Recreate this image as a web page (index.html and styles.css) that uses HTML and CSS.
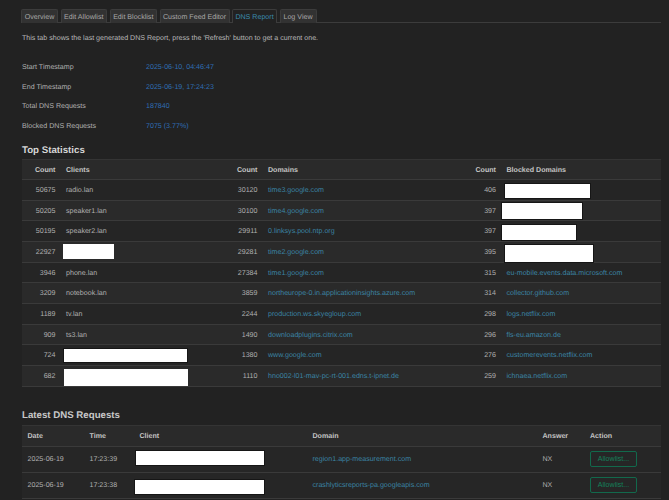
FILE: index.html
```html
<!DOCTYPE html>
<html lang="en">
<head>
    <meta charset="UTF-8">
    <title>DNS Report</title>
    <link rel="stylesheet" href="styles.css">
</head>
<body>

    <div class="tabs">
        <a class="tab tab-overview">Overview</a>
        <a class="tab tab-allow">Edit Allowlist</a>
        <a class="tab tab-block">Edit Blocklist</a>
        <a class="tab tab-feed">Custom Feed Editor</a>
        <a class="tab tab-dns active">DNS Report</a>
        <a class="tab tab-log">Log View</a>
    </div>

    <p class="intro">This tab shows the last generated DNS Report, press the 'Refresh' button to get a current one.</p>

    <div class="info">
        <div class="info-row"><span class="info-label">Start Timestamp</span><span class="info-value">2025-06-10, 04:46:47</span></div>
        <div class="info-row"><span class="info-label">End Timestamp</span><span class="info-value">2025-06-19, 17:24:23</span></div>
        <div class="info-row"><span class="info-label">Total DNS Requests</span><span class="info-value">187840</span></div>
        <div class="info-row"><span class="info-label">Blocked DNS Requests</span><span class="info-value">7075 (3.77%)</span></div>
    </div>

    <h3 class="top-title">Top Statistics</h3>
    <table class="stats">
        <colgroup>
            <col class="col-count1"><col class="col-clients"><col class="col-count2"><col class="col-domains"><col class="col-count3"><col>
        </colgroup>
        <thead>
            <tr><th class="num">Count</th><th>Clients</th><th class="num">Count</th><th>Domains</th><th class="num">Count</th><th>Blocked Domains</th></tr>
        </thead>
        <tbody>
            <tr><td class="num">50675</td><td>radio.lan</td><td class="num">30120</td><td><a>time3.google.com</a></td><td class="num">406</td><td class="hide"><span class="redact b1"></span></td></tr>
            <tr><td class="num">50205</td><td>speaker1.lan</td><td class="num">30100</td><td><a>time4.google.com</a></td><td class="num">397</td><td class="hide"><span class="redact b2"></span></td></tr>
            <tr><td class="num">50195</td><td>speaker2.lan</td><td class="num">29911</td><td><a>0.linksys.pool.ntp.org</a></td><td class="num">397</td><td class="hide"><span class="redact b3"></span></td></tr>
            <tr><td class="num">22927</td><td class="hide"><span class="redact c1"></span></td><td class="num">29281</td><td><a>time2.google.com</a></td><td class="num">395</td><td class="hide"><span class="redact b4"></span></td></tr>
            <tr><td class="num">3946</td><td>phone.lan</td><td class="num">27384</td><td><a>time1.google.com</a></td><td class="num">315</td><td><a>eu-mobile.events.data.microsoft.com</a></td></tr>
            <tr><td class="num">3209</td><td>notebook.lan</td><td class="num">3859</td><td><a>northeurope-0.in.applicationinsights.azure.com</a></td><td class="num">314</td><td><a>collector.github.com</a></td></tr>
            <tr><td class="num">1189</td><td>tv.lan</td><td class="num">2244</td><td><a>production.ws.skyegloup.com</a></td><td class="num">298</td><td><a>logs.netflix.com</a></td></tr>
            <tr><td class="num">909</td><td>ts3.lan</td><td class="num">1490</td><td><a>downloadplugins.citrix.com</a></td><td class="num">296</td><td><a>fls-eu.amazon.de</a></td></tr>
            <tr><td class="num">724</td><td class="hide"><span class="redact c2"></span></td><td class="num">1380</td><td><a>www.google.com</a></td><td class="num">276</td><td><a>customerevents.netflix.com</a></td></tr>
            <tr><td class="num">682</td><td class="hide"><span class="redact c3"></span></td><td class="num">1110</td><td><a>hno002-l01-mav-pc-rt-001.edns.t-ipnet.de</a></td><td class="num">259</td><td><a>ichnaea.netflix.com</a></td></tr>
        </tbody>
    </table>

    <h3 class="latest-title">Latest DNS Requests</h3>
    <table class="latest">
        <colgroup>
            <col class="col-date"><col class="col-time"><col class="col-client"><col class="col-domain"><col class="col-answer"><col>
        </colgroup>
        <thead>
            <tr><th>Date</th><th>Time</th><th>Client</th><th>Domain</th><th>Answer</th><th>Action</th></tr>
        </thead>
        <tbody>
            <tr><td>2025-06-19</td><td>17:23:39</td><td class="hide"><span class="redact l1"></span></td><td><a>region1.app-measurement.com</a></td><td>NX</td><td><button>Allowlist...</button></td></tr>
            <tr><td>2025-06-19</td><td>17:23:38</td><td class="hide"><span class="redact l2"></span></td><td><a>crashlyticsreports-pa.googleapis.com</a></td><td>NX</td><td><button>Allowlist...</button></td></tr>
        </tbody>
    </table>

</body>
</html>
```

FILE: styles.css
```css
html, body {
    height: 500px;
    overflow: hidden;
}
body {
    margin: 0;
    padding: 9px 8px 0 22px;
    background: #222222;
    color: #b0b0b0;
    font-family: 'Liberation Sans', Arial, sans-serif;
    font-size: 7.1px;
    text-rendering: geometricPrecision;
}
.tabs {
    display: flex;
    height: 13px;
    margin-left: -1px;
    border-bottom: 1px solid #3c3c3c;
}
.tab {
    display: flex;
    align-items: center;
    justify-content: center;
    height: 14px;
    box-sizing: border-box;
    margin-right: 2.5px;
    background: #323232;
    border: 1px solid #3c3c3c;
    border-bottom: none;
    border-radius: 2px 2px 0 0;
    color: #a8a8a8;
}
.tab-overview { width: 37px; }
.tab-allow { width: 46.5px; }
.tab-block { width: 47.5px; }
.tab-feed { width: 70px; }
.tab-dns { width: 45px; }
.tab-log { width: 37px; }
.tab.active {
    background: #222222;
    color: #3a8cae;
}
.intro {
    margin: 10px 0 0;
    line-height: 10px;
    color: #b8b8b8;
}
.info {
    margin-top: 15px;
}
.info-row {
    display: flex;
    height: 19.6px;
    line-height: 19.6px;
}
.info-label {
    width: 124px;
}
.info-value {
    color: #2f6db5;
}
h3 {
    margin: 0;
    font-size: 9.7px;
    line-height: 12px;
    color: #d6d6d6;
}
.top-title {
    margin-top: 9px;
}
.latest-title {
    margin-top: 23.5px;
    color: #c8c8c8;
}
table {
    width: 639px;
    margin-top: 2px;
    border-collapse: collapse;
    table-layout: fixed;
    border-top: 1px solid #343434;
}
.latest {
    margin-top: 2.5px;
}
th, td {
    padding: 0 5.5px;
    text-align: left;
    white-space: nowrap;
}
th {
    color: #c4c4c4;
    font-weight: bold;
    background: #2a2a2a;
    border-bottom: 1px solid #3a3a3a;
}
td {
    border-bottom: 1px solid #3a3a3a;
}
td a {
    color: #3b84a4;
}
.stats th { height: 18.6px; }
.stats td { height: 19.7px; }
.latest th { height: 20px; }
.latest td { height: 25px; }
tbody tr:nth-child(even) {
    background: #2a2a2a;
}
tbody tr:nth-child(odd) {
    background: #252525;
}
.latest tbody tr {
    background: #262626;
}
th.num, td.num {
    padding-right: 5px;
    text-align: right;
}
.col-count1 { width: 38.5px; }
.col-clients { width: 164px; }
.col-count2 { width: 38px; }
.col-domains { width: 194.5px; }
.col-count3 { width: 44px; }
.col-date { width: 62px; }
.col-time { width: 50px; }
.col-client { width: 173px; }
.col-domain { width: 230px; }
.col-answer { width: 47.5px; }
button {
    display: block;
    width: 47px;
    height: 16px;
    padding: 0;
    background: transparent;
    border: 1px solid #12694c;
    border-radius: 2px;
    color: #14805a;
    font-family: inherit;
    font-size: 7.1px;
}
.hide {
    position: relative;
}
.redact {
    position: absolute;
    background: #ffffff;
    box-shadow: 0 0 0 1px #161616;
}
.c1 { left: 2.5px; top: 2px; width: 51px; height: 15px; box-shadow: none; }
.c2 { left: 3px; top: 4px; width: 123.5px; height: 13px; }
.c3 { left: 3.5px; top: 3px; width: 124px; height: 17px; box-shadow: none; }
.b1 { left: 4px; top: 4px; width: 85px; height: 14px; }
.b2 { left: 1px; top: 2px; width: 80px; height: 16px; }
.b3 { left: 1px; top: 4px; width: 74px; height: 15px; }
.b4 { left: 4px; top: 3px; width: 88px; height: 17px; }
.l1 { left: 2px; top: 4px; width: 128px; height: 14px; }
.l2 { left: 1px; top: 7px; width: 129px; height: 14px; }
```
